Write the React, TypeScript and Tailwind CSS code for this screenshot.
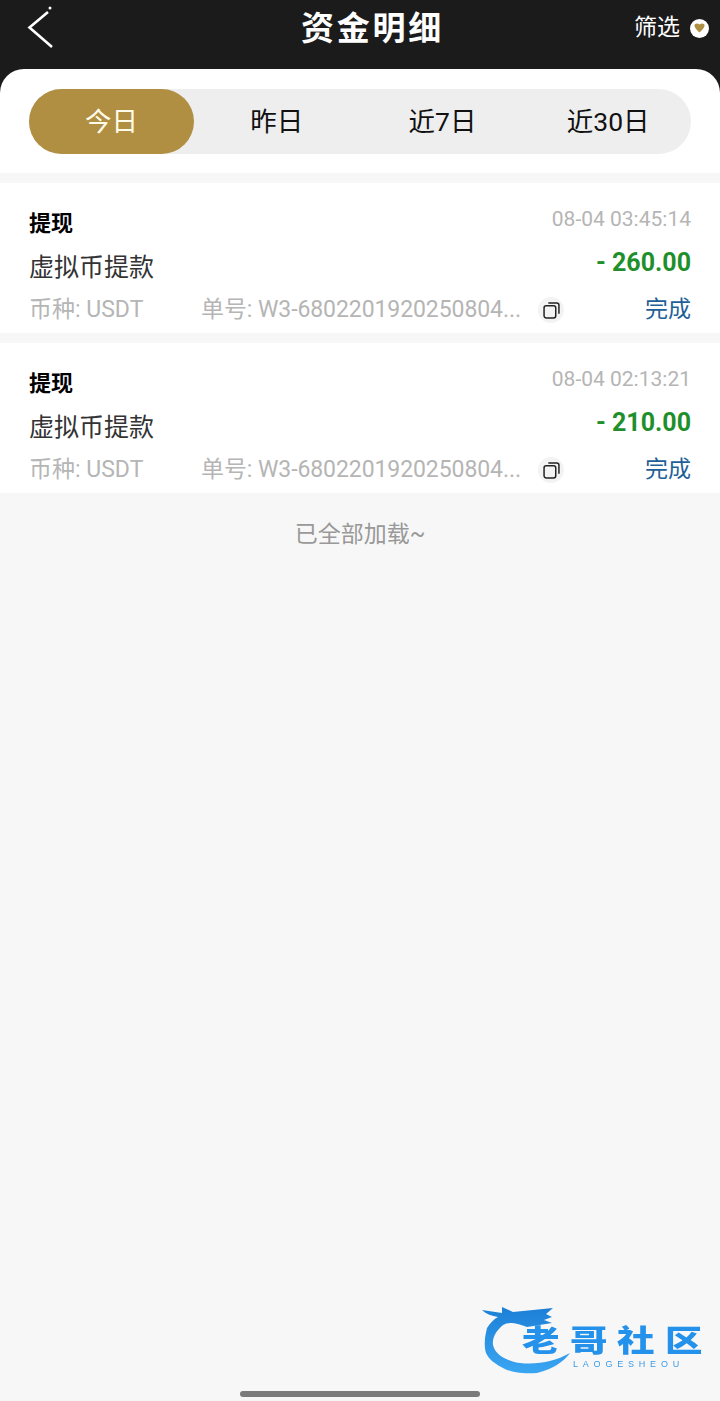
const FONT = "font-['Roboto','Noto_Sans_CJK_SC',sans-serif]"

const tabs = ['今日', '昨日', '近7日', '近30日']

const records = [
  { time: '08-04 03:45:14', amount: '- 260.00' },
  { time: '08-04 02:13:21', amount: '- 210.00' },
]

function CopyIcon() {
  return (
    <div className="w-[26px] h-[26px] rounded-full bg-[#f3f3f3] flex items-center justify-center">
      <svg width="17" height="17" viewBox="0 0 16 16" fill="none" stroke="#222" strokeWidth="1.4">
        <rect x="1" y="3.6" width="11" height="11.4" rx="2" />
        <path d="M5 1h8.2A1.8 1.8 0 0 1 15 2.8V11" />
      </svg>
    </div>
  )
}

function RecordCard({ time, amount }: { time: string; amount: string }) {
  return (
    <div className="bg-white h-[150px] px-[29px] flex flex-col">
      <div className="flex justify-between h-[40px] mt-[22px]">
        <span className="text-[22px] leading-[40px] font-bold text-black -mt-[1px]">提现</span>
        <span className="text-[21px] leading-[30px] text-[#b5b5b5] -mt-[1px]">{time}</span>
      </div>
      <div className="flex justify-between items-start h-[44px]">
        <span className="text-[25px] leading-[46px] text-[#333]">虚拟币提款</span>
        <span className="text-[25px] leading-[36px] font-bold text-[#1f8f2b]">{amount}</span>
      </div>
      <div className="flex items-center h-[38px] pt-[4px] text-[23px] text-[#b5b5b5]">
        <span className="w-[172px] shrink-0">币种: USDT</span>
        <span className="w-[325px] shrink-0 whitespace-nowrap overflow-hidden tracking-[-0.08px]">单号: W3-6802201920250804...</span>
        <div className="ml-[12px]"><CopyIcon /></div>
        <span className="ml-auto text-[#1f5f99]">完成</span>
      </div>
    </div>
  )
}

function Watermark() {
  return (
    <div className="absolute left-[482px] top-[1305px] w-[225px] h-[70px] blur-[0.6px]">
      <svg width="100" height="70" viewBox="0 0 100 70" className="absolute left-0 top-0">
        <defs>
          <linearGradient id="dragon" x1="0" y1="0" x2="0" y2="1">
            <stop offset="0" stopColor="#1c7fd6" />
            <stop offset="1" stopColor="#3aa6f2" />
          </linearGradient>
        </defs>
        <path
          d="M0 5 L20 8 L20 2 L31 7 L71 3 L64 9 L70 12 L62 15 L70 18 L45 22 C32 17 26 17 21 20 C14 26 10 33 11 40 C13 50 25 56 38 58 C56 60 74 56 88 48 C82 56 72 64 55 68 C40 69 28 67 21 63 C9 57 3 50 3 43 C2 34 4 28 5 23 C8 18 12 14 16 12 C10 11 4 9 0 5 Z"
          fill="url(#dragon)"
        />
      </svg>
      <div className="absolute left-[35px] top-[21px] w-[190px] grid grid-cols-4 text-center text-[30px] leading-[30px] font-black text-[#2491ea] whitespace-nowrap">
        <span className="scale-x-125">老</span>
        <span className="scale-x-125">哥</span>
        <span className="scale-x-125">社</span>
        <span className="scale-x-125">区</span>
      </div>
      <div className="absolute left-[91px] top-[55px] text-[9px] leading-[8px] tracking-[4.8px] text-[#3b9be6] font-['Liberation_Sans',sans-serif]">
        LAOGESHEOU
      </div>
    </div>
  )
}

export default function App() {
  return (
    <div className={`relative w-[720px] h-[1401px] overflow-hidden bg-[#f7f7f7] ${FONT}`}>
      <div className="bg-[#1b1b1b]">
        <div className="h-[69px] flex items-start relative">
          <svg width="30" height="50" viewBox="0 0 30 50" fill="none" className="ml-[26px] mt-[5px]" stroke="#fff" strokeWidth="2.6">
            <path d="M22 7 L3.5 22.5 L26 42" />
            <circle cx="24" cy="3" r="1.5" fill="#fff" stroke="none" />
          </svg>
          <h1 className="absolute left-0 right-[-25px] top-[7px] text-center text-[33px] leading-[44px] tracking-[2.7px] font-bold text-white">资金明细</h1>
          <div className="ml-auto mr-[11px] mt-[10px] flex items-center gap-[10px]">
            <span className="text-[23px] leading-[36px] text-white">筛选</span>
            <span className="w-[19px] h-[19px] rounded-full bg-white flex items-center justify-center">
              <svg width="11" height="10" viewBox="0 0 11 10">
                <path d="M0.5 2.5C0.5 0.6 3.5 -0.2 5.5 1.6C7.5 -0.2 10.5 0.6 10.5 2.5C10.5 4.8 7.5 7.6 5.5 9.5C3.5 7.6 0.5 4.8 0.5 2.5Z" fill="#b08f42" />
              </svg>
            </span>
          </div>
        </div>
        <div className="bg-white rounded-t-[24px] h-[104px] px-[29px] pt-[20px]">
          <div className="h-[65px] rounded-full bg-[#eeeeee] grid grid-cols-[165px_1fr_1fr_1fr]">
            {tabs.map((tab, i) => (
              <div
                key={tab}
                className={`rounded-full flex items-center justify-center text-[26.5px] ${i === 0 ? 'bg-[#b08f42] text-[#fffbe8]' : 'text-[#111]'}`}
              >
                {tab}
              </div>
            ))}
          </div>
        </div>
      </div>

      <div className="pt-[10px] flex flex-col gap-[10px]">
        {records.map(r => <RecordCard key={r.time} {...r} />)}
      </div>
      <p className="mt-[24px] text-center text-[23px] leading-[36px] text-[#999]">已全部加载~</p>

      <Watermark />
      <div className="absolute left-[240px] top-[1391px] w-[240px] h-[6px] rounded-full bg-[#7b7b7b]" />
    </div>
  )
}
